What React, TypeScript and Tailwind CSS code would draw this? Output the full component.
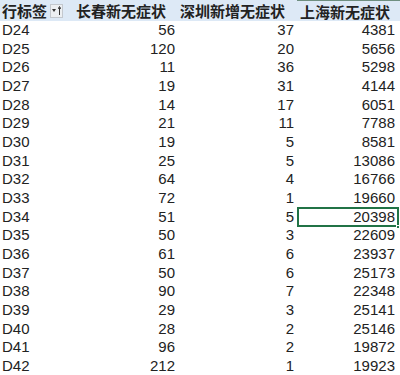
import React from "react";

const rows: [string, number, number, number][] = [
  ["D24", 56, 37, 4381],
  ["D25", 120, 20, 5656],
  ["D26", 11, 36, 5298],
  ["D27", 19, 31, 4144],
  ["D28", 14, 17, 6051],
  ["D29", 21, 11, 7788],
  ["D30", 19, 5, 8581],
  ["D31", 25, 5, 13086],
  ["D32", 64, 4, 16766],
  ["D33", 72, 1, 19660],
  ["D34", 51, 5, 20398],
  ["D35", 50, 3, 22609],
  ["D36", 61, 6, 23937],
  ["D37", 50, 6, 25173],
  ["D38", 90, 7, 22348],
  ["D39", 29, 3, 25141],
  ["D40", 28, 2, 25146],
  ["D41", 96, 2, 19872],
  ["D42", 212, 1, 19923],
];

const cjk = "font-['Noto_Sans_CJK_SC',sans-serif]";
const num = "font-['Liberation_Sans_Narrow','Liberation_Sans',sans-serif]";

export default function App() {
  return (
    <div className="w-[400px] h-[375px] overflow-hidden bg-white text-[#222]">
      {/* 表头 */}
      <div className={`flex h-[21px] bg-[#dde9f6] font-bold text-[15px] leading-[21px] ${cjk}`}>
        <div className="w-[74px] flex items-center pl-[2px]">
          <span>行标签</span>
          <div className="ml-[3px] w-[13px] h-[14px] border border-[#c3c8ce] bg-[#eceff2] flex items-center justify-center gap-[2px]">
            <svg width="4" height="3" viewBox="0 0 4 3">
              <path d="M0 0 L4 0 L2 3 Z" fill="#333" />
            </svg>
            <svg width="3" height="9" viewBox="0 0 3 9">
              <path d="M1.5 9 V1.5 M0 3 L1.5 0.5 L3 3" stroke="#333" strokeWidth="1" fill="none" />
            </svg>
          </div>
        </div>
        <div className="w-[104px] pl-[2px]">长春新无症状</div>
        <div className="w-[119px] pl-[2px]">深圳新增无症状</div>
        <div className="w-[103px] pl-[3px] border-t border-[#6f8f80]">上海新无症状</div>
      </div>

      {/* 数据行 */}
      {rows.map(([label, cc, sz, sh]) => (
        <div key={label} className={`flex h-[18.67px] text-[15px] leading-[18.67px] ${num}`}>
          <div className="w-[74px] pl-[2px]">{label}</div>
          <div className="w-[104px] text-right pr-[3px]">{cc}</div>
          <div className="w-[119px] text-right pr-[3px]">{sz}</div>
          <div className="w-[103px] relative">
            <div className="text-right pr-[5px]">{sh}</div>
            {label === "D34" && (
              <>
                <div className="absolute left-0 top-[-1px] w-[102px] h-[20px] border-2 border-[#217346]" />
                <div className="absolute right-0 top-[17px] w-[4px] h-[4px] bg-[#217346] border border-white" />
              </>
            )}
          </div>
        </div>
      ))}
    </div>
  );
}
